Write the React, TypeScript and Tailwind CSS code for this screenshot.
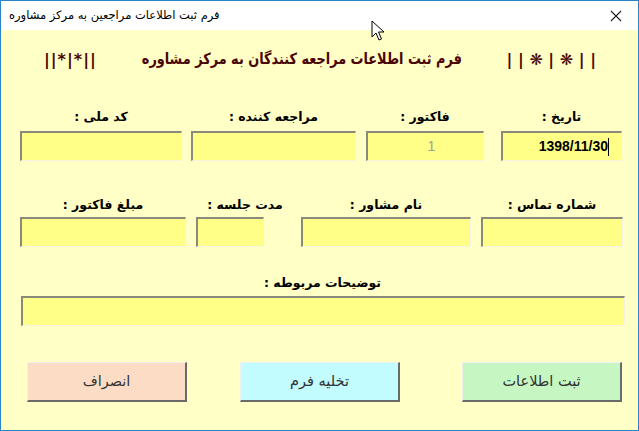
import React from "react";

const fa = { fontFamily: '"DejaVu Sans", "Noto Sans", sans-serif' };

function Field({ w, children, cls = "" }: { w: string; children?: React.ReactNode; cls?: string }) {
  return (
    <div
      className={`${w} h-[30px] bg-[#ffff88] border-t-2 border-l-2 border-t-[#8a8a7a] border-l-[#8a8a7a] border-b border-r border-b-[#f4f4e0] border-r-[#f4f4e0] flex items-center ${cls}`}
    >
      {children}
    </div>
  );
}

function Label({ w, text }: { w: string; text: string }) {
  return (
    <div className={`${w} text-center text-[12.5px] font-bold text-black leading-[18px] whitespace-nowrap`} style={fa}>
      {text}
    </div>
  );
}

function Btn({ text, bg }: { text: string; bg: string }) {
  return (
    <div
      className={`w-[160px] h-[40px] ${bg} border-t border-l border-t-[#f0f0f0] border-l-[#f0f0f0] border-b-2 border-r-2 border-b-[#6a6a6a] border-r-[#6a6a6a] flex items-center justify-center text-[14.5px] text-[#333]`}
      style={fa}
    >
      {text}
    </div>
  );
}

export default function App() {
  return (
    <div className="w-[639px] h-[431px] relative border border-[#2a84c8] bg-[#ffffc6] flex flex-col overflow-hidden">
      {/* title bar */}
      <div className="h-[29px] bg-white flex items-center justify-between pl-2 pr-3 shrink-0">
        <span className="text-[11.5px] text-black" style={fa} dir="rtl">
          فرم ثبت اطلاعات مراجعین به مرکز مشاوره
        </span>
        <svg width="12" height="12" viewBox="0 0 12 12" className="mr-1">
          <path d="M1 1 L11 11 M11 1 L1 11" stroke="#222" strokeWidth="1.1" />
        </svg>
      </div>

      <div dir="rtl" className="flex flex-col">
        {/* heading */}
        <div className="mt-[18px] h-[24px] flex items-center pr-[42px] text-[#4a0505] font-bold" style={fa}>
          <div className="text-[16px] whitespace-pre" dir="ltr">| | ❋ | ❋ | |</div>
          <div className="mr-[12px] text-[15.5px] whitespace-nowrap scale-x-[0.83]">
            فرم ثبت اطلاعات مراجعه کنندگان به مرکز مشاوره
          </div>
          <div className="mr-[12px] text-[16px] tracking-[1px] whitespace-pre" dir="ltr">||*|*||</div>
        </div>

        {/* row 1 */}
        <div className="mt-[36px] flex pr-[16px]">
          <Label w="w-[121px]" text="تاریخ :" />
          <div className="w-[17px]" />
          <Label w="w-[118px]" text="فاکتور :" />
          <div className="w-[10px]" />
          <Label w="w-[165px]" text="مراجعه کننده :" />
          <div className="w-[9px]" />
          <Label w="w-[162px]" text="کد ملی :" />
        </div>
        <div className="mt-[5px] flex pr-[16px]">
          <Field w="w-[121px]" cls="justify-start pr-[12px]">
            <span className="w-px h-[18px] bg-black" />
            <span className="text-[14px] font-bold text-black" style={{ fontFamily: '"Liberation Sans", sans-serif' }} dir="ltr">
              1398/11/30
            </span>
          </Field>
          <div className="w-[17px]" />
          <Field w="w-[118px]" cls="justify-center">
            <span className="text-[14px] text-[#a0a0a0] pl-[12px]" style={{ fontFamily: '"Liberation Sans", sans-serif' }}>
              1
            </span>
          </Field>
          <div className="w-[10px]" />
          <Field w="w-[165px]" />
          <div className="w-[9px]" />
          <Field w="w-[162px]" />
        </div>

        {/* row 2 */}
        <div className="mt-[35px] flex pr-[15px]">
          <Label w="w-[142px]" text="شماره تماس :" />
          <div className="w-[10px]" />
          <Label w="w-[170px]" text="نام مشاور :" />
          <div className="w-[7px]" />
          <Label w="w-[98px]" text="مدت جلسه :" />
          <div className="w-[10px]" />
          <Label w="w-[166px]" text="مبلغ فاکتور :" />
        </div>
        <div className="mt-[3px] flex pr-[15px]">
          <Field w="w-[142px]" />
          <div className="w-[10px]" />
          <Field w="w-[170px]" />
          <div className="w-[37px]" />
          <Field w="w-[68px]" />
          <div className="w-[10px]" />
          <Field w="w-[166px]" />
        </div>

        {/* row 3 */}
        <div className="mt-[27px] flex justify-center pl-[6px]">
          <Label w="w-[200px]" text="توضیحات مربوطه :" />
        </div>
        <div className="mt-[4px] flex pr-[13px]">
          <Field w="w-[604px]" />
        </div>

        {/* buttons */}
        <div className="mt-[36px] flex pr-[16px]">
          <Btn text="ثبت اطلاعات" bg="bg-[#c6f7c2]" />
          <div className="w-[62px]" />
          <Btn text="تخلیه فرم" bg="bg-[#c2fcff]" />
          <div className="w-[53px]" />
          <Btn text="انصراف" bg="bg-[#fcdcc4]" />
        </div>
      </div>

      {/* mouse pointer */}
      <svg className="absolute left-[370px] top-[19px]" width="14" height="22" viewBox="0 0 14 22">
        <path d="M1 1 L1 17 L5 13 L8 20 L10.5 19 L7.5 12 L13 12 Z" fill="white" stroke="black" strokeWidth="1" strokeLinejoin="round" />
      </svg>
    </div>
  );
}
